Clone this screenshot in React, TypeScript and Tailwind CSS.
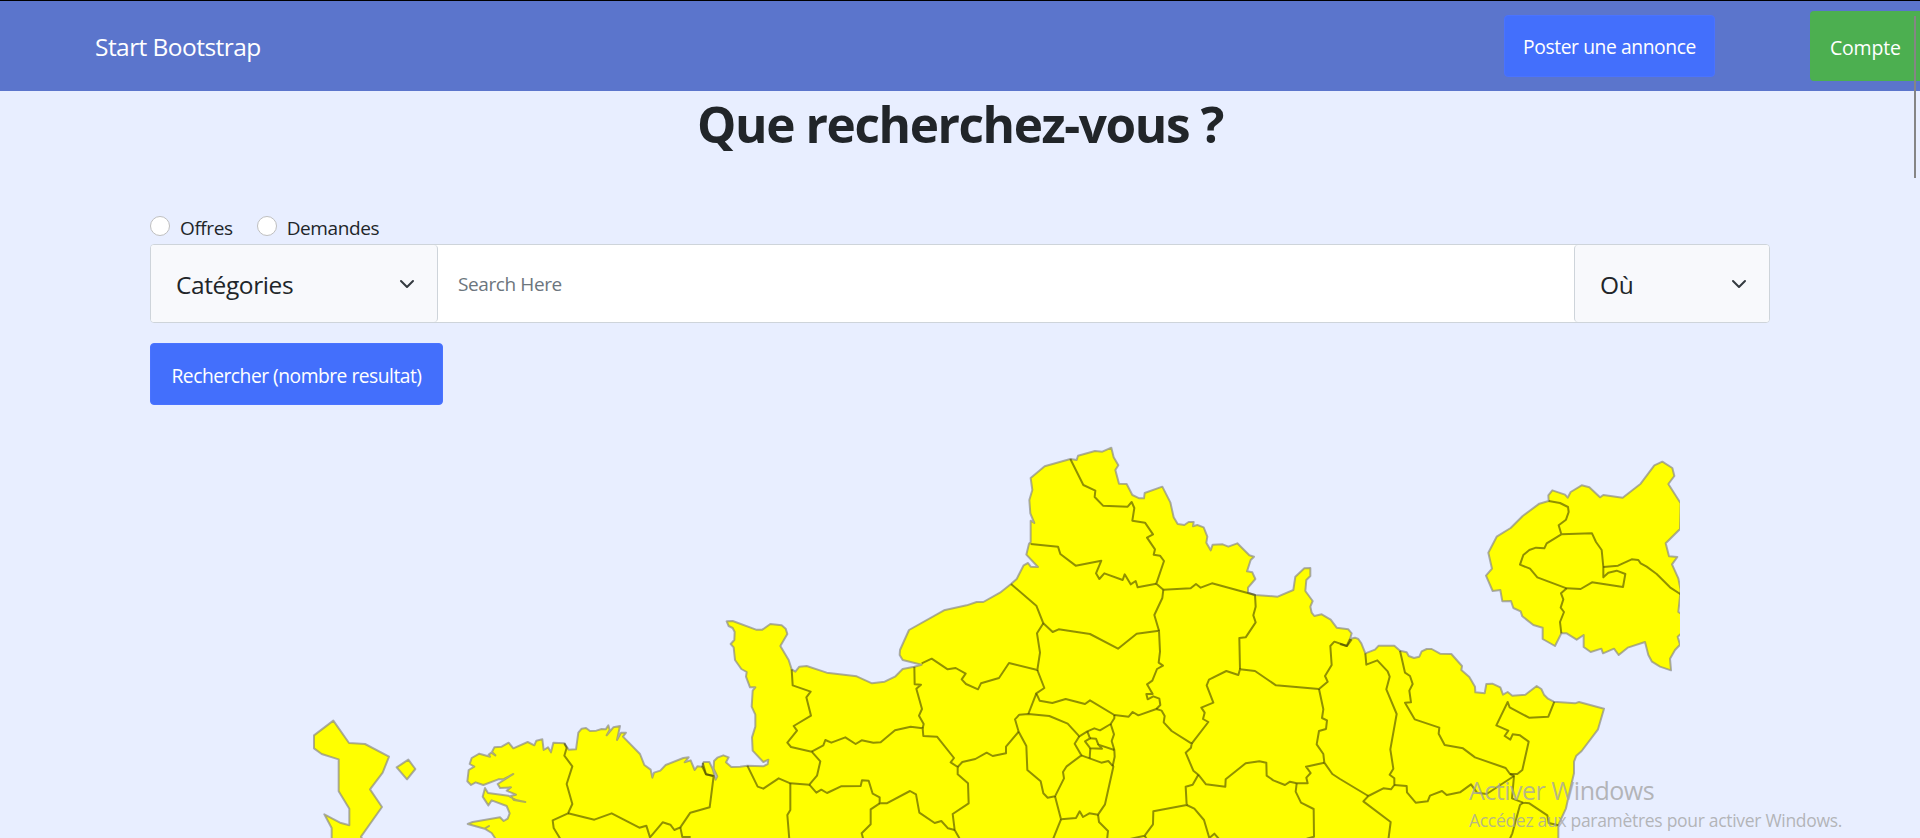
import React from "react";

type Tile = keyof typeof TILES;
type Segment = [Tile, string];

/* Origins of the map tiles, in thirds of a pixel. */
const TILES = {
  north: [2940, 1290],
  centre: [2940, 1830],
  east: [4020, 1620],
  normandy: [2100, 1800],
  brittany: [1320, 2100],
  overseas: [900, 2100],
  paris: [4380, 1320],
} as const;

const MAP_LEFT = 240;
const MAP_TOP = 430;

const toPath = (segments: Segment[], closed = false) => {
  const points = segments.flatMap(([tile, text]) => {
    const [ox, oy] = TILES[tile];
    return text
      .trim()
      .split(",")
      .map((pair) => {
        const [x, y] = pair.trim().split(" ").map(Number);
        return `${((x + ox) / 3 - MAP_LEFT).toFixed(2)} ${((y + oy) / 3 - MAP_TOP).toFixed(2)}`;
      });
  });
  return `M${points.join("L")}${closed ? "Z" : ""}`;
};

const SHAPES: Segment[][] = [
  [
    ["brittany", "165 440,165 414,155 399,134 386,147 378,134 386,83 372,98 366,180 352,191 363,203 356,209 340,200 318,155 301,145 316,128 290,135 264,144 279,205 287,228 300,256 306,222 300,212 288,228 284,200 272,213 262,180 264,173 252,220 222,192 237,175 238,130 255,107 247,93 255,82 244,86 210,103 200,89 192,95 174,118 161,150 170,146 164,154 158,166 166,156 156,163 142,185 140,206 128,220 145,263 126,283 136,289 122,307 118,311 150,324 142,333 157,340 128,373 130,386 149,408 148,415 98,425 86,438 84,450 93,469 92,485 87,497 88,505 76,509 90,500 106,520 82,540 78,531 120,543 98,558 98,549 110,600 162,613 195,632 209,637 233,642 218,661 212,677 195,730 174,746 172,734 187,752 181,764 210,772 199,786 200,791 186,808 186,818 207,827 239,832 229,821 206,822 183,832 173,850 166,866 172,858 187,874 201,900 200"],
    ["normandy", "142 497,190 499,203 492,205 479,190 486,158 452,156 412,166 380,166 344,155 320,158 272,166 262,150 262,138 230,140 216,124 207,105 180,101 142,92 132,103 120,104 96,98 84,86 78,80 64,98 63,168 89,187 89,211 72,245 76,257 86,262 102,241 138,266 180,275 208,286 215,298 200,320 198,380 218,470 229,516 250,554 245,585 230,608 207,643 200,665 194,608 180,599 165,600 150,627 90,732 31,800 16,830 6,850 6"],
    ["north", "60 488,93 462,110 447,131 406,144 399,152 410,174 411,139 374,147 341,152 336,152 272,163 279,151 250,148 210,157 180,152 144,194 109,271 87,290 90,294 77,345 63,367 65,394 53,401 82,415 106,406 120,417 161,440 162,457 195,478 205,492 205,494 189,547 170,571 217,581 262,593 282,613 285,626 276,641 276,639 289,652 285,671 292,682 320,679 338,692 361,698 344,728 343,745 350,772 340,808 376,822 380,812 390,801 424,817 427,826 447,804 473,804 488,825 495,893 500,940 480,946 440,973 415,991 414,991 438,979 450,976 483,998 513,991 530,995 548,1003 558,1025 553,1052 569,1070 593,1105 598"],
    ["east", "35 280,30 297,45 293,55 297,64 310,76 340,105 329,116 317,163 317,180 332,200 337,206 348,222 354,238 350,245 334,260 327,275 327,300 341,334 342,366 378,364 390,388 411,405 440,406 457,434 460,439 432,457 431,481 442,489 464,503 456,517 467,556 464,590 438,604 447,612 464,624 476,641 485,705 490,717 486,792 506,774 568,725 633,709 647,702 665,702 700,690 750,678 805,655 855,655 920"],
  ],
  [["overseas", "100 62,147 129,195 132,267 170,248 218,210 268,246 321,183 410,200 440,95 440,95 384,73 343,120 368,148 376,148 326,116 274,116 178,65 162,42 145,42 106"]],
  [["overseas", "325 179,346 207,321 238,290 202"]],
  [["paris", "607 65,637 84,643 108,625 132,662 190,660 267,617 310,627 349,652 351,636 373,655 415,662 450,655 516,670 525,670 575,653 590,660 614,645 630,630 656,633 691,600 680,576 665,565 645,555 606,503 623,476 645,462 626,429 640,424 626,392 636,371 621,371 585,350 599,320 580,304 580,285 618,248 597,248 563,220 555,187 529,182 514,160 504,153 483,127 484,121 450,98 453,78 407,96 386,85 338,110 290,152 264,188 228,238 191,266 183,265 166,277 151,315 164,323 173,332 156,365 136,388 142,420 172,430 165,488 173,542 131,583 76"]],
];

const BORDERS: Segment[] = [
  ["north", "271 87,310 165,346 182,344 201,369 227,443 230,455 216,463 234,457 272,495 278,519 313,501 323,525 358,521 374,540 377,552 393,529 461,550 479"],
  ["north", "152 342,234 350,241 372,287 407,364 392,348 430,358 447,373 430,428 450,434 433,452 463,467 453,473 472,529 461"],
  ["north", "550 479,632 475,648 462,662 473,696 460,825 495,827 530,820 556,827 577,797 622,778 624,780 718"],
  ["north", "550 479,547 504,523 555,537 602"],
  ["north", "93 462,169 527,190 580"],
  ["centre", "190 40,218 66,236 58,330 72,414 116,470 71,537 62,540 125,536 158,549 167,531 177,517 212,501 223,518 252,499 252,503 268,520 259,538 266,541 285,529 297"],
  ["centre", "190 40,171 70,180 128,172 180,87 159,57 204,3 220,-6 238,-42 222,-55 208,-43 191,-73 174,-97 178,-145 146,-175 160"],
  ["centre", "172 180,193 234,169 250,179 272,217 279,257 267,315 282,330 271,403 315,446 320,458 306,475 316,529 297,545 302,554 318,551 337,575 363,635 401,633 413,617 428,640 482,655 494,678 523,736 530,737 508,797 460,838 454,859 458,860 497,880 511,915 525,930 515,950 520,983 520,979 503,992 489,978 470,1033 458"],
  ["centre", "635 401,685 336,669 327,674 308,664 293,700 278,680 226,687 209,739 183,775 195,780 178,825 183,888 226,1017 237,1043 215,1035 198,1055 165,1051 108,1063 95,1101 108,1115 88"],
  ["centre", "1017 237,1030 298,1026 324,1041 331,1038 357,1017 363,1010 403,1030 432,1033 458,1057 492,1080 507,1165 558"],
  ["centre", "169 250,145 312"],
  ["centre", "116 365,105 328,118 314,145 312,208 318,263 341,298 379,322 364,343 355,360 361,392 342,403 325,403 315"],
  ["centre", "116 365,139 408,142 480,182 514,190 550,203 563,225 559,252 505,249 486,260 469,304 436,284 401,298 379"],
  ["centre", "116 365,78 410,78 430,38 438,20 428,-14 447,-53 456,-67 471"],
  ["centre", "225 559,243 628,288 624,299 604,309 621,328 610,354 614,375 583,400 470,385 453,364 458,304 436"],
  ["centre", "392 342,402 373,395 393,403 420,404 440,398 468"],
  ["centre", "322 364,330 385,315 394,331 415,366 416,355 404,403 420"],
  ["centre", "330 385,348 386,355 404"],
  ["centre", "331 415,329 445"],
  ["centre", "243 628,218 690"],
  ["centre", "354 614,357 636,384 663,381 690"],
  ["centre", "655 494,638 524,617 530,620 585,520 604,519 643,494 677,450 687"],
  ["centre", "494 677,502 690"],
  ["centre", "620 585,643 596,672 630,688 684,703 671,718 688"],
  ["centre", "950 520,947 545,963 578,1001 597,1002 680,980 686"],
  ["east", "0 312,20 318,30 297"],
  ["east", "76 340,79 374,112 361,143 394,149 410,139 448,170 522,151 628,160 686,149 704,163 715,163 735,153 748,130 745,85 768,70 784,152 846,145 900"],
  ["east", "163 735,200 738,201 757,227 788,263 784,270 767,306 753,320 765,360 757,393 733,411 758,440 762,522 708"],
  ["east", "180 332,195 398,210 408,218 432,208 452,213 487,195 488,224 538,298 563,296 581,314 615,369 625,405 652,497 684,510 702,522 708,516 775,549 788,568 790,622 826,626 849,655 856"],
  ["east", "549 788,540 795,517 880,508 900"],
  ["east", "510 702,532 702,547 690,566 605,540 586,518 583,511 599,494 588,505 572,469 556,503 486,509 502,567 533,625 530,643 485"],
  ["normandy", "275 208,278 256,332 275,319 292,333 347,281 378,291 392,262 428,273 441,335 455,361 484,351 527,328 554,271 550,236 535,190 566,173 560,142 497"],
  ["normandy", "335 455,370 436,376 420,394 428,436 412,467 432,485 421,520 428,542 427,585 391,632 380,668 385,670 408,711 410,762 474,752 487,773 501,773 523,804 550,806 610,758 642,764 690,780 718"],
  ["normandy", "643 200,644 253,663 254,649 266,666 327,657 347,671 372,668 385"],
  ["normandy", "328 554,349 578,364 569,381 579,423 559,482 558,486 541,506 542,518 581,539 592,539 610,560 610,630 573,648 583,658 638,704 669,724 663,744 685,764 690"],
  ["normandy", "539 610,512 628,512 673,485 700,490 718"],
  ["normandy", "271 550,271 630,262 645,268 718"],
  ["normandy", "8 488,18 523,40 528"],
  ["brittany", "373 130,380 143,373 167,397 199,380 252,397 312,384 340,338 361,341 384,363 420"],
  ["brittany", "384 340,463 359,515 340,598 383,619 377,630 412,668 367,691 374,703 390,721 382,751 338,809 322,821 228,798 223,786 198"],
  ["brittany", "721 382,727 411,752 411"],
  ["paris", "266 183,300 189,324 201,326 216,318 239,296 256,304 283,260 310,253 325,228 323,208 330,190 345,180 374,210 386,232 412,320 445,362 447,396 427,489 441,496 402,470 392,445 398,430 412,430 381,425 330,408 306,396 280,304 283"],
  ["paris", "430 381,474 377,515 358,535 360,542 370,560 380,590 402,630 442,662 463"],
  ["paris", "320 445,303 460,310 478,302 503,312 516,300 546,304 580"],
];

function Chevron() {
  return (
    <svg viewBox="0 0 16 16" className="h-4 w-4 shrink-0" fill="none" stroke="#343a40" strokeWidth="2" strokeLinecap="round" strokeLinejoin="round">
      <path d="M2 5l6 6 6-6" />
    </svg>
  );
}

function Header() {
  return (
    <header className="flex h-[91px] shrink-0 items-center border-t border-black bg-[#5b75cc] text-white">
      <a className="ml-[95px] w-[1409px] shrink-0 pt-[2px] text-[24.5px] tracking-[-0.55px]">Start Bootstrap</a>
      <button className="h-[62px] w-[211px] shrink-0 rounded border border-[#4a73ff] bg-[#436ffc] pt-[2px] text-[19.25px] tracking-[-0.4px]">
        Poster une annonce
      </button>
      <button className="ml-[95px] h-[70px] w-[120px] shrink-0 rounded bg-[#4caf50] pl-5 pt-[3px] text-left text-[19.5px] tracking-[-0.2px]">
        Compte
      </button>
    </header>
  );
}

function Radio({ label }: { label: string }) {
  return (
    <label className="flex items-start gap-[10px] text-[19px] leading-[24px] tracking-[-0.4px]">
      <span className="h-5 w-5 rounded-full border border-[#bfbfbf] bg-white" />
      {label}
    </label>
  );
}

function SearchForm() {
  return (
    <form className="mx-[150px] mt-[60px]">
      <div className="flex h-[28px] gap-[24px]">
        <Radio label="Offres" />
        <Radio label="Demandes" />
      </div>
      <div className="flex h-[79px] overflow-hidden rounded border border-[#ced4da] bg-white">
        <div className="flex w-[287px] items-center justify-between rounded-r border-r border-[#ced4da] bg-[#f8f9fc] pl-[25px] pr-[22px] text-[24.5px] tracking-[-0.4px]">
          <span className="pt-[3px]">Catégories</span>
          <Chevron />
        </div>
        <div className="flex flex-1 items-center pl-5 pt-[2px] text-[19px] tracking-[-0.4px] text-[#6c757d]">Search Here</div>
        <div className="flex w-[195px] items-center justify-between rounded-l border-l border-[#ced4da] bg-[#f8f9fc] pl-[25px] pr-[22px] text-[24.5px] tracking-[-0.4px]">
          <span className="pt-[3px]">Où</span>
          <Chevron />
        </div>
      </div>
      <button type="button" className="mt-5 h-[62px] w-[293px] rounded border border-[#4a73ff] bg-[#436ffc] pt-[4px] text-[19.25px] tracking-[-0.5px] text-white">
        Rechercher (nombre resultat)
      </button>
    </form>
  );
}

function FranceMap() {
  return (
    <svg className="ml-[240px] mt-[25px] block h-[408px] w-[1440px] shrink-0" viewBox="0 0 1440 408">
      <g strokeWidth="2" strokeLinejoin="round">
        {SHAPES.map((shape, i) => (
          <path key={i} d={toPath(shape, true)} fill="#ffff00" stroke="#848484" strokeOpacity="0.65" />
        ))}
        {BORDERS.map((line, i) => (
          <path key={i} d={toPath([line])} fill="none" stroke="#404000" strokeOpacity="0.58" strokeWidth="2" />
        ))}
      </g>
    </svg>
  );
}

export default function App() {
  return (
    <div className="relative flex h-[838px] w-full flex-col overflow-hidden bg-[#e8eeff] text-[#212529] [font-family:'Open_Sans','Noto_Sans',sans-serif]">
      <Header />
      <h1 className="h-[65px] text-center text-[49.5px] font-bold leading-[66px] tracking-[-1.4px]">Que recherchez-vous ?</h1>
      <SearchForm />
      <FranceMap />
      <div className="absolute left-[1914px] top-4 h-[162px] w-[2px] bg-[#858585]" />
      <div className="absolute left-[1469px] top-[772px] whitespace-nowrap text-[#a5a5a5]/80">
        <p className="text-[25px] leading-[36px] tracking-[-0.5px]">Activer Windows</p>
        <p className="text-[17.5px] leading-[24px] tracking-[-0.3px]">Accédez aux paramètres pour activer Windows.</p>
      </div>
    </div>
  );
}
